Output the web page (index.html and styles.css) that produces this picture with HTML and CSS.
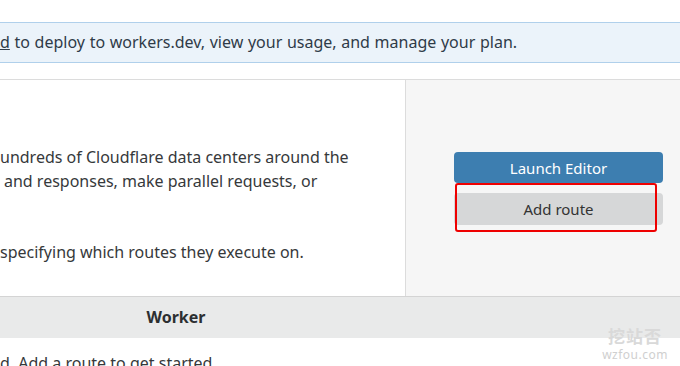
FILE: index.html
```html
<!DOCTYPE html>
<html lang="en">
<head>
    <meta charset="UTF-8">
    <title>Workers</title>
    <link rel="stylesheet" href="styles.css">
</head>
<body>
    <!-- Account notice -->
    <div class="notice">
        <span class="notice-link">d</span> to deploy to workers.dev, view your usage, and manage your plan.
    </div>

    <!-- Intro card -->
    <div class="card">
        <div class="card-body">
            <p class="intro">
                <span class="line">undreds of Cloudflare data centers around the</span>
                <span class="line indent">and responses, make parallel requests, or</span>
            </p>
            <p class="intro">specifying which routes they execute on.</p>
        </div>
        <div class="card-side">
            <button class="btn btn-primary">Launch Editor</button>
            <button class="btn btn-default">Add route</button>
            <div class="highlight"></div>
        </div>
    </div>

    <!-- Routes table -->
    <div class="table">
        <div class="table-head">
            <div class="th">Worker</div>
            <div class="th"></div>
        </div>
        <div class="table-empty">d. Add a route to get started.</div>
    </div>

    <div class="watermark">
        <div class="wm-cn">挖站否</div>
        <div class="wm-en">wzfou.com</div>
    </div>
</body>
</html>
```

FILE: styles.css
```css
/* Global Styles */
body {
    font-family: 'Noto Sans', 'Noto Sans CJK SC', sans-serif;
    font-size: 16px;
    color: #36393b;
    margin: 0;
    background: #fff;
    overflow: hidden;
    position: relative;
    height: 366px;
}

/* Notice banner */
.notice {
    margin-top: 22px;
    height: 39px;
    line-height: 39px;
    background: #ebf3fa;
    border-top: 1px solid #b0d0eb;
    border-bottom: 1px solid #b0d0eb;
    color: #2f3b48;
    white-space: nowrap;
    word-spacing: 0.5px;
}

.notice-link {
    text-decoration: underline;
}

/* Card */
.card {
    display: flex;
    margin-top: 16px;
    border-top: 1px solid #dcdcdc;
    border-bottom: 1px solid #d4d4d4;
    height: 216px;
}

.card-body {
    flex: 1;
    padding-top: 65px;
}

.intro {
    margin: 0 0 47px;
    line-height: 24px;
    white-space: nowrap;
}

.line {
    display: block;
}

.indent {
    padding-left: 4px;
}

.card-side {
    position: relative;
    width: 275px;
    background: #f6f6f6;
    border-left: 1px solid #dcdcdc;
    padding: 72px 17px 0 48px;
    box-sizing: border-box;
    display: flex;
    flex-direction: column;
    gap: 10px;
}

.btn {
    font-family: inherit;
    font-size: 15px;
    border: none;
    border-radius: 4px;
    height: 31px;
    width: 100%;
    padding: 0;
}

.btn-primary {
    background: #3d7eb0;
    color: #fff;
}

.btn-default {
    background: #d6d7d8;
    color: #333;
    height: 32px;
}

/* red annotation box */
.highlight {
    position: absolute;
    left: 49px;
    top: 103px;
    width: 198px;
    height: 45px;
    border: 2px solid #ee0000;
    border-radius: 3px;
}

/* Table */
.table-head {
    display: grid;
    grid-template-columns: 352px 1fr;
    background: #e9eaea;
    height: 41px;
}

.th {
    font-weight: bold;
    font-size: 16px;
    text-align: center;
    line-height: 41px;
    color: #2c2f31;
}

.table-empty {
    padding-top: 13px;
    line-height: 24px;
    white-space: nowrap;
}

/* Watermark */
.watermark {
    position: absolute;
    right: 12px;
    bottom: 4px;
    text-align: center;
}

.wm-cn {
    font-family: 'Noto Sans CJK SC', sans-serif;
    font-weight: bold;
    font-size: 17px;
    letter-spacing: 1px;
    color: #d9d9d9;
    line-height: 18px;
    margin-bottom: 3px;
}

.wm-en {
    font-size: 12px;
    line-height: 14px;
    color: #cfcfcf;
    letter-spacing: 0.5px;
}
```
